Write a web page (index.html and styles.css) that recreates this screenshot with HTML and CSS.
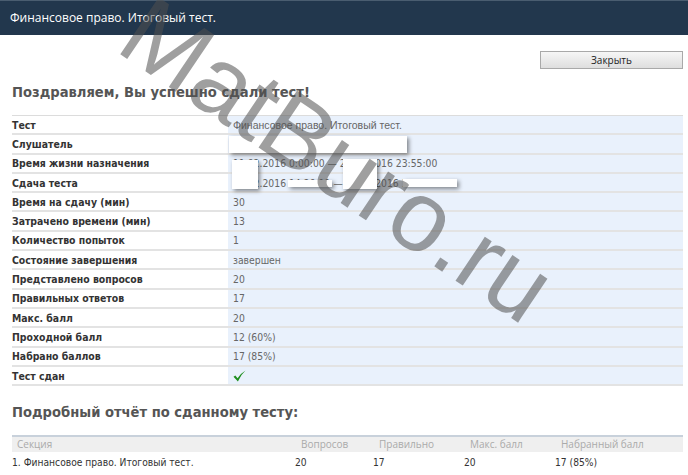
FILE: index.html
```html
<!DOCTYPE html>
<html lang="ru">
<head>
  <meta charset="UTF-8">
  <title>Финансовое право. Итоговый тест.</title>
  <link rel="stylesheet" href="styles.css">
</head>
<body>
  <div class="titlebar">Финансовое право. Итоговый тест.</div>

  <div class="page">
    <div class="toolbar">
      <button class="close-btn">Закрыть</button>
    </div>

    <h2>Поздравляем, Вы успешно сдали тест!</h2>

    <div class="summary">
      <div class="row"><div class="label">Тест</div><div class="value narrow">Финансовое право. Итоговый тест.</div></div>
      <div class="row"><div class="label">Слушатель</div><div class="value">Иванов Иван Иванович</div></div>
      <div class="row"><div class="label">Время жизни назначения</div><div class="value">11.02.2016 0:00:00 — 29.02.2016 23:55:00</div></div>
      <div class="row"><div class="label">Сдача теста</div><div class="value">26.02.2016 14:20:11 — 26.02.2016 14:33:40</div></div>
      <div class="row"><div class="label">Время на сдачу (мин)</div><div class="value">30</div></div>
      <div class="row"><div class="label">Затрачено времени (мин)</div><div class="value">13</div></div>
      <div class="row"><div class="label">Количество попыток</div><div class="value">1</div></div>
      <div class="row"><div class="label">Состояние завершения</div><div class="value">завершен</div></div>
      <div class="row"><div class="label">Представлено вопросов</div><div class="value">20</div></div>
      <div class="row"><div class="label">Правильных ответов</div><div class="value">17</div></div>
      <div class="row"><div class="label">Макс. балл</div><div class="value">20</div></div>
      <div class="row"><div class="label">Проходной балл</div><div class="value">12 (60%)</div></div>
      <div class="row"><div class="label">Набрано баллов</div><div class="value">17 (85%)</div></div>
      <div class="row"><div class="label">Тест сдан</div><div class="value">
        <svg class="check" width="13" height="12" viewBox="0 0 13 12"><path d="M0.5 6.8 L2.3 5.4 L4.6 8.2 Q7.5 3.5 12.5 0.5 Q8 4.5 4.9 11.5 Z" fill="#1f8f1f"/></svg>
      </div></div>

      <!-- hidden personal data -->
      <div class="mask m1"></div>
      <div class="mask m2"></div>
      <div class="mask m3"></div>
      <div class="mask m4"></div>
      <div class="mask m5"></div>
    </div>

    <h2 class="report-title">Подробный отчёт по сданному тесту:</h2>

    <div class="report">
      <div class="report-head">
        <div>Секция</div>
        <div>Вопросов</div>
        <div>Правильно</div>
        <div>Макс. балл</div>
        <div>Набранный балл</div>
      </div>
      <div class="report-row">
        <div>1. Финансовое право. Итоговый тест.</div>
        <div>20</div>
        <div>17</div>
        <div>20</div>
        <div>17 (85%)</div>
      </div>
    </div>
  </div>

  <div class="watermark">MatBuro.ru</div>
</body>
</html>
```

FILE: styles.css
```css
body {
  margin: 0;
  font-family: "DejaVu Sans", Verdana, sans-serif;
  font-size: 11px;
  color: #333;
  background: #fff;
  overflow: hidden;
}

.titlebar {
  background-color: #22374d;
  border-top: 1px solid #4a5d70;
  color: #fff;
  height: 34px;
  line-height: 34px;
  padding-left: 10px;
  font-family: "Open Sans", "Liberation Sans", sans-serif;
  font-size: 12px;
}

.page {
  margin: 0 5px 0 12px;
}

.toolbar {
  display: flex;
  justify-content: flex-end;
  padding-top: 16px;
}

.close-btn {
  width: 143px;
  height: 18px;
  border: 1px solid #a9a9a9;
  background: linear-gradient(#f6f6f6, #dedede);
  font-family: "Open Sans", "Liberation Sans", sans-serif;
  font-size: 10px;
  color: #222;
  padding: 0;
}

h2 {
  margin: 14px 0 0;
  font-size: 14.6px;
  font-weight: bold;
  color: #555;
  font-stretch: condensed;
}

.summary {
  position: relative;
  margin-top: 15px;
  border-top: 1px solid #dcdcdc;
}

.row {
  display: flex;
  height: 19.3px;
  box-sizing: border-box;
  border-bottom: 2px solid #e3e3e3;
  align-items: center;
}

.label {
  width: 216px;
  flex: none;
  font-size: 10.4px;
  font-weight: bold;
  color: #333;
  font-stretch: condensed;
}

.value {
  flex: 1;
  align-self: stretch;
  display: flex;
  align-items: center;
  background-color: #e9f1fc;
  padding-left: 5px;
  font-size: 10.3px;
  color: #666;
  font-stretch: condensed;
  white-space: nowrap;
}

.value.narrow {
  font-family: "Liberation Sans", sans-serif;
  font-size: 10.5px;
}

.check {
  display: block;
}

.mask {
  position: absolute;
  background: #fff;
  box-shadow: 2px 2px 4px rgba(0, 0, 0, 0.45);
}

.m1 { left: 217px; top: 20px; width: 178px; height: 17px; }
.m2 { left: 220px; top: 44px; width: 26px; height: 29px; }
.m3 { left: 331px; top: 43px; width: 34px; height: 30px; }
.m4 { left: 276px; top: 64px; width: 44px; height: 7px; }
.m5 { left: 391px; top: 63px; width: 54px; height: 8px; }

.report-title {
  margin-top: 17px;
  color: #555;
}

.report {
  margin-top: 15px;
  border-top: 2px solid #c8d1db;
}

.report-head,
.report-row {
  display: grid;
  grid-template-columns: 278px 78px 91px 91px 1fr;
}

.report-head {
  background-color: #efefef;
  height: 15px;
  line-height: 15px;
  color: #aaa;
  font-family: "Open Sans", "Liberation Sans", sans-serif;
  font-size: 10px;
}

.report-head div {
  padding-left: 11px;
}

.report-head div:first-child {
  padding-left: 5px;
}

.report-row {
  height: 22px;
  line-height: 22px;
  font-size: 10.2px;
  font-stretch: condensed;
}

.report-row div {
  padding-left: 5px;
}

.report-row div:first-child {
  padding-left: 0;
}

.watermark {
  position: absolute;
  left: 92px;
  top: 105px;
  width: 480px;
  text-align: center;
  font-family: "Liberation Sans", Arial, sans-serif;
  font-size: 100px;
  line-height: 100px;
  color: rgba(80, 80, 80, 0.55);
  transform: rotate(34deg);
  pointer-events: none;
}
```
